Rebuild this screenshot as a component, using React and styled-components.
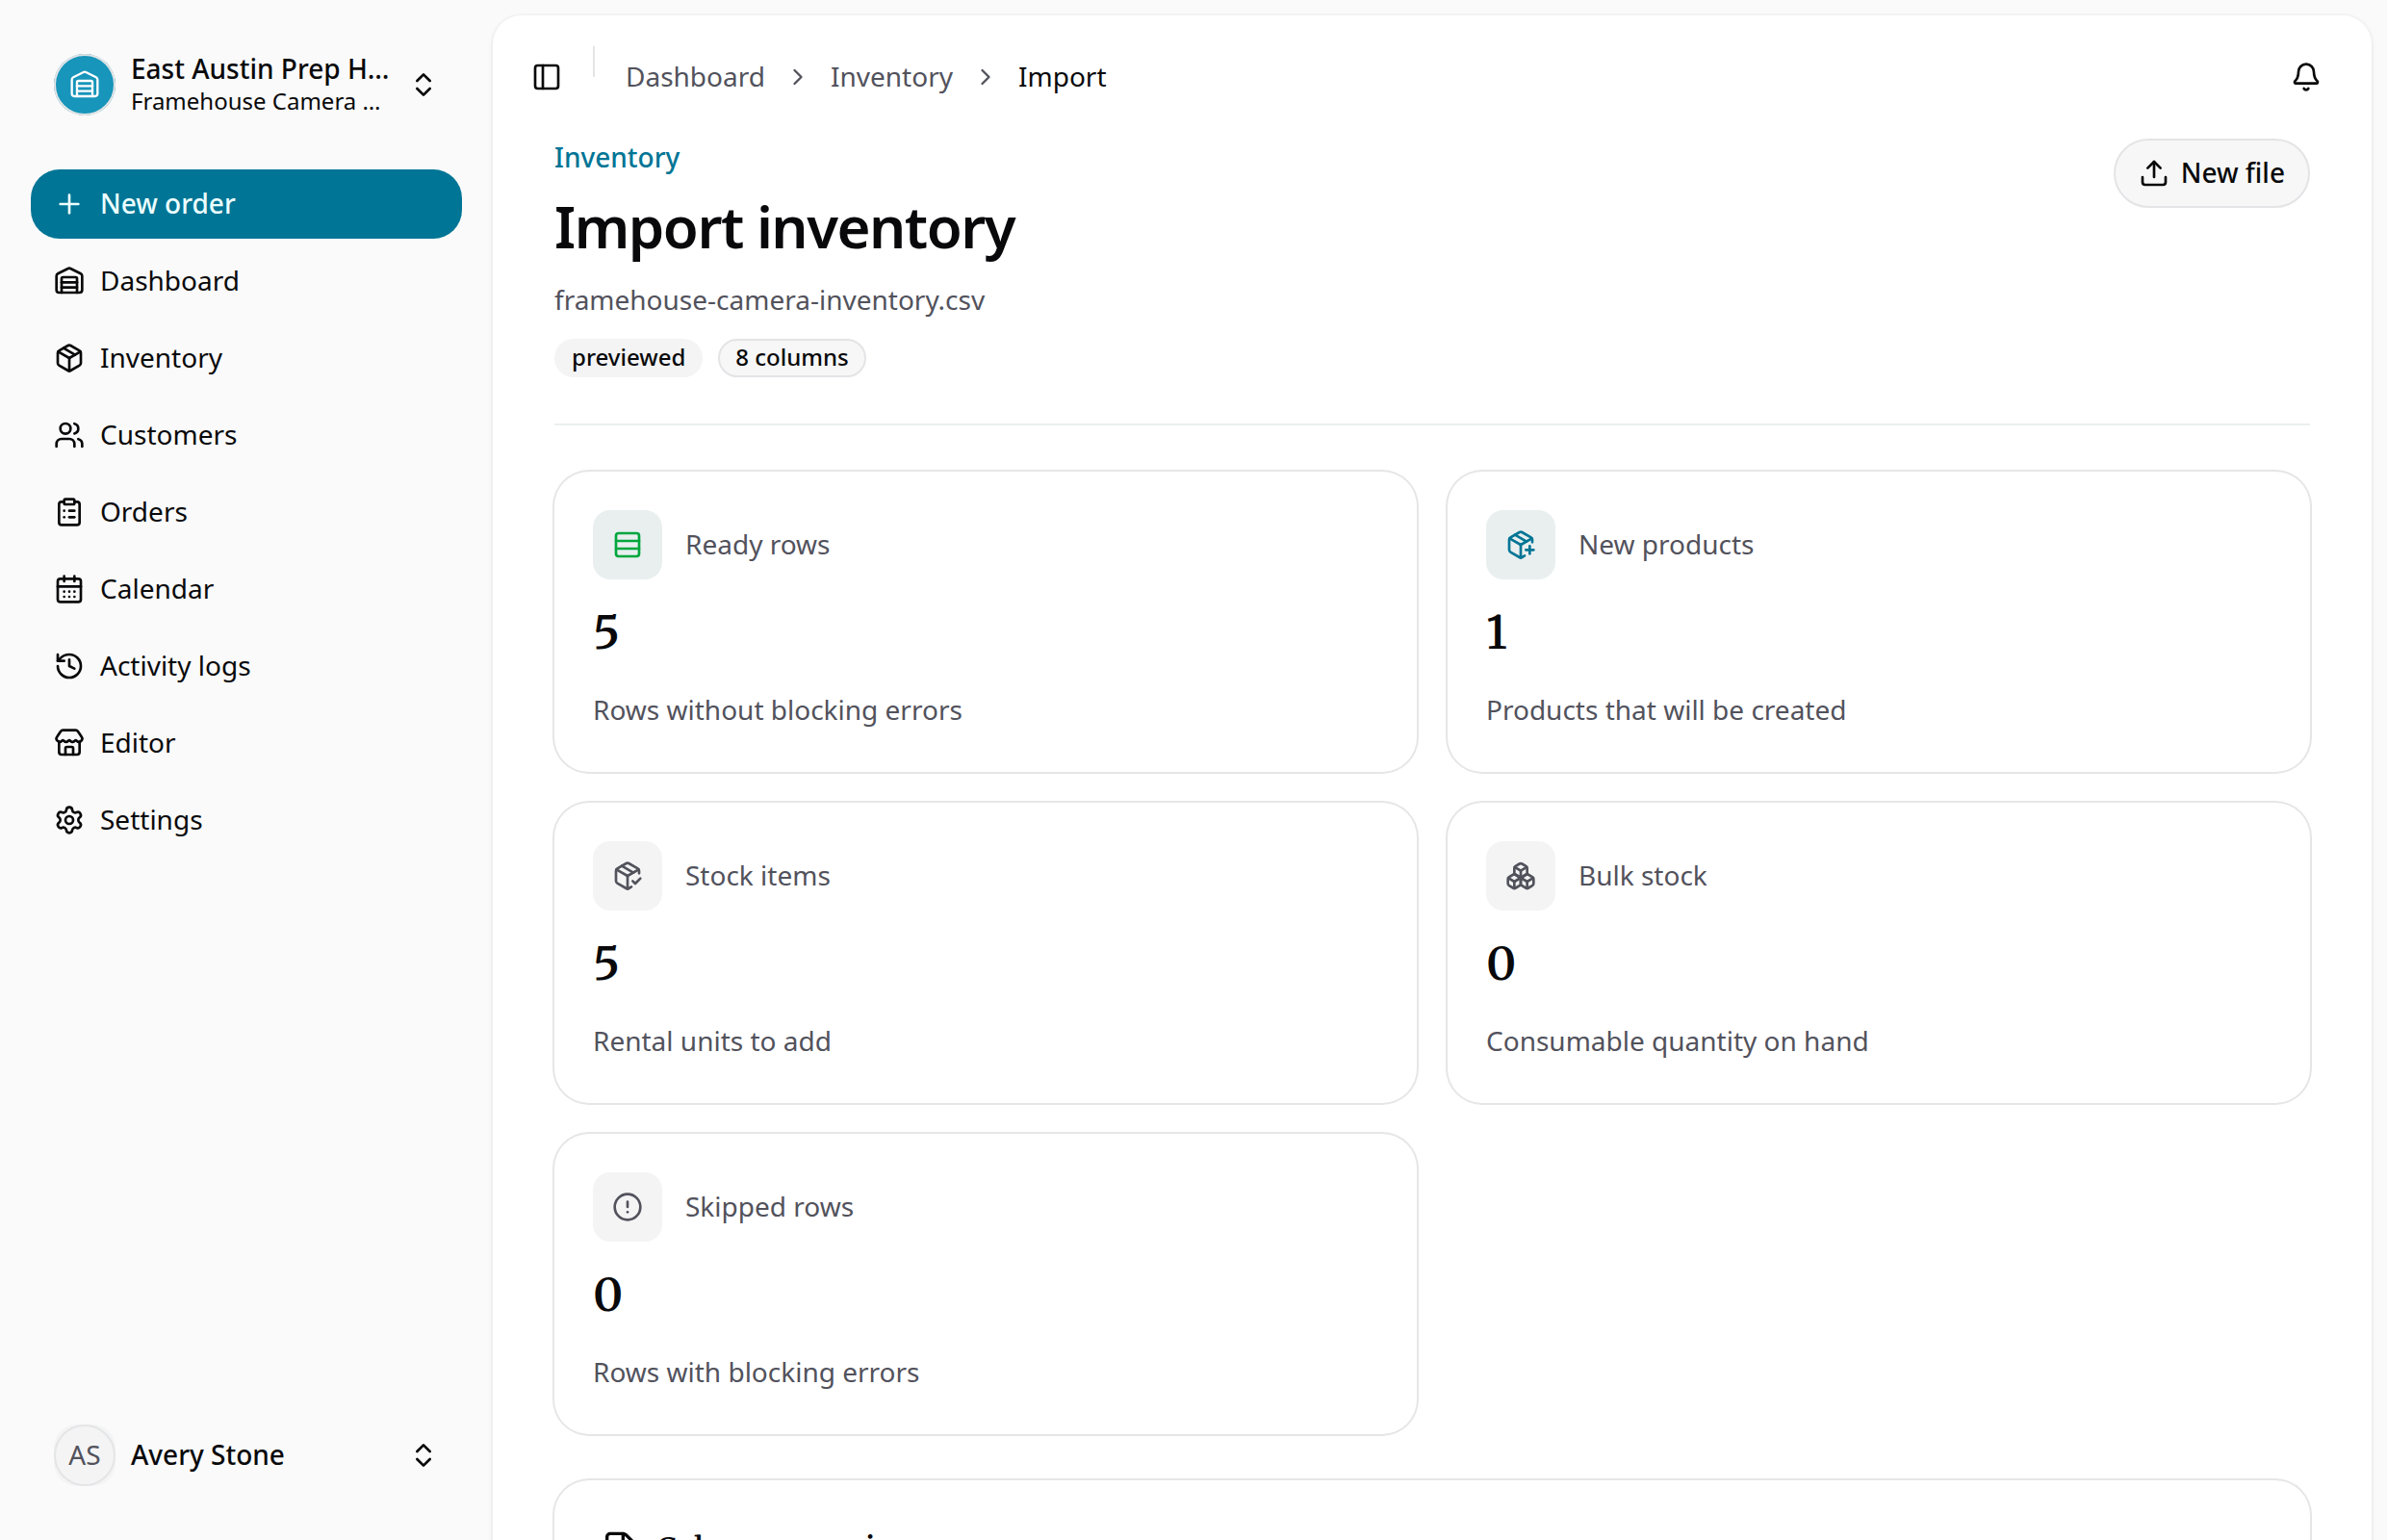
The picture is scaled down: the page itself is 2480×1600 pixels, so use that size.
import React from 'react'
import styled, { createGlobalStyle } from 'styled-components'
import {
  Bell,
  Boxes,
  CalendarDays,
  ChevronRight,
  ChevronsUpDown,
  CircleAlert,
  ClipboardList,
  FileSpreadsheet,
  History,
  Package,
  PackageCheck,
  PackagePlus,
  PanelLeft,
  Plus,
  Rows3,
  Settings,
  Store,
  Upload,
  Users,
  Warehouse,
} from 'lucide-react'

const GlobalStyle = createGlobalStyle`
  *, *::before, *::after {
    box-sizing: border-box;
  }
  body {
    margin: 0;
    background: #fafafa;
    color: #09090b;
    font-family: "Noto Sans", sans-serif;
    font-size: 28px;
    line-height: 38px;
    overflow: hidden;
  }
  h1, h2, p {
    margin: 0;
  }
  svg {
    flex-shrink: 0;
  }
`

// Page frame
const Layout = styled.div`
  display: flex;
  width: 100vw;
  height: 100vh;
  overflow: hidden;
`

const Sidebar = styled.aside`
  display: flex;
  flex-direction: column;
  width: 512px;
  flex-shrink: 0;
  padding: 32px;
`

const Main = styled.main`
  flex: 1;
  min-width: 0;
  height: 1700px;
  margin: 16px 16px 0 0;
  background: #fff;
  border-radius: 30px;
  box-shadow: 0 0 0 2px rgba(0, 0, 0, 0.02), 0 2px 6px rgba(0, 0, 0, 0.06);
`

// Text that sits next to an icon
const Label = styled.span`
  padding-bottom: 2px;
`

// Sidebar
const AccountButton = styled.div`
  display: flex;
  align-items: center;
  gap: 16px;
  height: 112px;
  padding: 0 24px;
`

const Avatar = styled.div`
  position: relative;
  display: flex;
  align-items: center;
  justify-content: center;
  width: 64px;
  height: 64px;
  flex-shrink: 0;
  border-radius: ${({ $brand }) => ($brand ? '50%' : '24px')};
  background: ${({ $brand }) => ($brand ? '#1795ba' : '#f4f4f5')};
  color: ${({ $brand }) => ($brand ? '#fff' : '#52525c')};

  &::after {
    content: "";
    position: absolute;
    inset: 0;
    border: 2px solid #e4e5e6;
    border-radius: 50%;
  }
`

const AccountText = styled.div`
  flex: 1;
  min-width: 0;
  padding-bottom: 2px;
  white-space: nowrap;
`

const AccountName = styled.div`
  font-weight: 500;
  line-height: 35px;
`

const AccountDetail = styled.div`
  font-size: 24px;
  line-height: 32px;
`

const Nav = styled.nav`
  display: flex;
  flex-direction: column;
  flex: 1;
  gap: 8px;
  margin-top: 32px;
`

const NavItem = styled.a`
  display: flex;
  align-items: center;
  gap: 16px;
  height: 72px;
  padding: 0 24px;
  border-radius: 30px;
  background: ${({ $primary }) => ($primary ? '#007595' : 'transparent')};
  color: ${({ $primary }) => ($primary ? '#ecfeff' : 'inherit')};
  font-weight: ${({ $primary }) => ($primary ? 500 : 400)};
`

// Top bar
const TopBar = styled.header`
  display: flex;
  align-items: center;
  height: 128px;
  padding: 0 52px 0 40px;
`

const BarDivider = styled.div`
  align-self: flex-start;
  width: 2px;
  height: 32px;
  margin: 32px 32px 0 32px;
  background: #e4e4e7;
`

const Breadcrumb = styled.nav`
  display: flex;
  align-items: center;
  flex: 1;
  gap: 20px;
  color: #52525c;
`

const CurrentPage = styled(Label)`
  color: #09090b;
`

// Page heading
const Content = styled.div`
  padding: 0 64px;
`

const PageHeader = styled.div`
  display: flex;
  align-items: flex-start;
  justify-content: space-between;
  height: 298px;
  border-bottom: 2px solid #ebefef;
`

const Eyebrow = styled.p`
  padding-bottom: 2px;
  color: #007595;
  font-weight: 500;
`

const Title = styled.h1`
  margin: 15px 0 21px;
  font-size: 60px;
  font-weight: 600;
  line-height: 72px;
  letter-spacing: -0.025em;
`

const FileName = styled.p`
  padding-bottom: 2px;
  color: #52525c;
`

const Badges = styled.div`
  display: flex;
  gap: 16px;
  margin-top: 20px;
`

const Badge = styled.span`
  height: 40px;
  padding: 0 16px;
  border: 2px solid ${({ $outline }) => ($outline ? '#e4e4e7' : 'transparent')};
  border-radius: 20px;
  background: ${({ $outline }) => ($outline ? '#f7f7f7' : '#f4f4f5')};
  font-size: 24px;
  font-weight: 500;
  line-height: 33px;
`

const OutlineButton = styled.button`
  display: flex;
  align-items: center;
  gap: 12px;
  height: 72px;
  padding: 0 24px;
  border: 2px solid #e4e4e7;
  border-radius: 36px;
  background: #f7f7f7;
  color: inherit;
  font: inherit;
  font-weight: 500;
`

// Cards
const StatGrid = styled.div`
  display: grid;
  grid-template-columns: 1fr 1fr;
  gap: 32px;
  margin: 48px 0;
`

const Card = styled.section`
  padding: 40px;
  border-radius: 36px;
  background: #fff;
  box-shadow: 0 0 0 2px #e6e6e7;
`

const StatCard = styled(Card)`
  height: 312px;
`

const StatHead = styled.div`
  display: flex;
  align-items: center;
  gap: 24px;
  color: #52525c;
`

const IconTile = styled.div`
  display: flex;
  align-items: center;
  justify-content: center;
  width: 72px;
  height: 72px;
  border-radius: 18px;
  background: ${({ $tinted }) => ($tinted ? '#e9efef' : '#f4f4f5')};
  color: ${({ $color }) => $color || '#52525c'};
`

const StatValue = styled.div`
  margin: 27px 0 33px;
  font-family: Merriweather, "Noto Serif", "DejaVu Serif", serif;
  font-size: 48px;
  font-weight: 600;
  line-height: 56px;
`

const StatNote = styled.p`
  color: #52525c;
`

const MappingTitle = styled.h2`
  display: flex;
  align-items: center;
  gap: 18px;
  padding: 9px 8px;
  font-family: Merriweather, "Noto Serif", "DejaVu Serif", serif;
  font-size: 32px;
  font-weight: 600;
  line-height: 44px;
  letter-spacing: -0.005em;
`

const navItems = [
  { label: 'New order', icon: Plus, primary: true },
  { label: 'Dashboard', icon: Warehouse },
  { label: 'Inventory', icon: Package },
  { label: 'Customers', icon: Users },
  { label: 'Orders', icon: ClipboardList },
  { label: 'Calendar', icon: CalendarDays },
  { label: 'Activity logs', icon: History },
  { label: 'Editor', icon: Store },
  { label: 'Settings', icon: Settings },
]

const stats = [
  { label: 'Ready rows', value: 5, note: 'Rows without blocking errors', icon: Rows3, color: '#00a63e', tinted: true },
  { label: 'New products', value: 1, note: 'Products that will be created', icon: PackagePlus, color: '#007595', tinted: true },
  { label: 'Stock items', value: 5, note: 'Rental units to add', icon: PackageCheck },
  { label: 'Bulk stock', value: 0, note: 'Consumable quantity on hand', icon: Boxes },
  { label: 'Skipped rows', value: 0, note: 'Rows with blocking errors', icon: CircleAlert },
]

const AppSidebar = () => {
  return (
    <Sidebar>
      <AccountButton>
        <Avatar $brand><Warehouse size={32} strokeWidth={1.75} /></Avatar>
        <AccountText>
          <AccountName>East Austin Prep H…</AccountName>
          <AccountDetail>Framehouse Camera …</AccountDetail>
        </AccountText>
        <ChevronsUpDown size={32} />
      </AccountButton>

      <Nav>
        {navItems.map(({ label, icon: Icon, primary }) => (
          <NavItem key={label} $primary={primary}>
            <Icon size={32} />
            <Label>{label}</Label>
          </NavItem>
        ))}
      </Nav>

      <AccountButton>
        <Avatar><Label>AS</Label></Avatar>
        <AccountText>
          <AccountName>Avery Stone</AccountName>
        </AccountText>
        <ChevronsUpDown size={32} />
      </AccountButton>
    </Sidebar>
  )
}

const App = () => {
  return (
    <Layout>
      <GlobalStyle />
      <AppSidebar />
      <Main>
        <TopBar>
          <PanelLeft size={32} />
          <BarDivider />
          <Breadcrumb>
            <Label>Dashboard</Label>
            <ChevronRight size={28} />
            <Label>Inventory</Label>
            <ChevronRight size={28} />
            <CurrentPage>Import</CurrentPage>
          </Breadcrumb>
          <Bell size={32} />
        </TopBar>

        <Content>
          <PageHeader>
            <div>
              <Eyebrow>Inventory</Eyebrow>
              <Title>Import inventory</Title>
              <FileName>framehouse-camera-inventory.csv</FileName>
              <Badges>
                <Badge>previewed</Badge>
                <Badge $outline>8 columns</Badge>
              </Badges>
            </div>
            <OutlineButton>
              <Upload size={32} />
              <Label>New file</Label>
            </OutlineButton>
          </PageHeader>

          <StatGrid>
            {stats.map(({ label, value, note, icon: Icon, color, tinted }) => (
              <StatCard key={label}>
                <StatHead>
                  <IconTile $color={color} $tinted={tinted}>
                    <Icon size={32} />
                  </IconTile>
                  <Label>{label}</Label>
                </StatHead>
                <StatValue>{value}</StatValue>
                <StatNote>{note}</StatNote>
              </StatCard>
            ))}
          </StatGrid>

          <Card>
            <MappingTitle>
              <FileSpreadsheet size={40} />
              <Label>Column mapping</Label>
            </MappingTitle>
          </Card>
        </Content>
      </Main>
    </Layout>
  )
}

export default App
